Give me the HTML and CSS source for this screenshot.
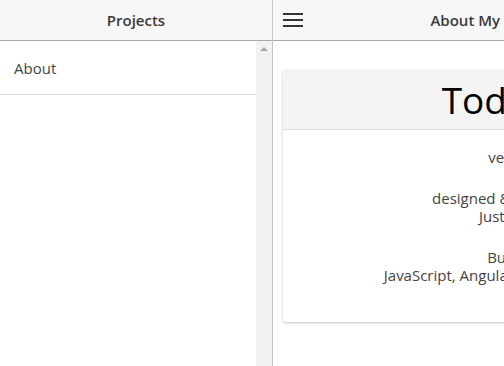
FILE: index.html
```html
<!DOCTYPE html>
<html>
	<head>
		<meta charset="utf-8">
		<link rel="stylesheet" href="styles.css">
	</head>
	<body>
		<div class="app">
			<aside class="sidebar">
				<header class="bar sidebarBar">
					<span class="barTitle">Projects</span>
				</header>
				<div class="sideBody">
					<ul class="projectList">
						<li class="projectItem">About</li>
					</ul>
					<div class="scrollbar">
						<span class="arrowUp"></span>
					</div>
				</div>
			</aside>

			<main class="detail">
				<header class="bar detailBar">
					<svg class="menuIcon" width="20" height="16" viewBox="0 0 20 16">
						<rect x="0" y="1" width="20" height="2"></rect>
						<rect x="0" y="7" width="20" height="2"></rect>
						<rect x="0" y="13" width="20" height="2"></rect>
					</svg>
					<span class="barTitle detailTitle">About My Todo List</span>
				</header>

				<div class="content">
					<section class="card">
						<div class="cardHead">
							<h1>Todo List</h1>
						</div>
						<div class="cardBody">
							<p>version 1</p>
							<p>designed &amp; developed by<br>Justin Miller</p>
							<p>Built with<br>JavaScript, Angular, Bootstrap and Sass</p>
						</div>
					</section>
				</div>
			</main>
		</div>
	</body>
</html>
```
FILE: styles.css
```css
html, body {
	margin: 0;
	height: 100%;
	overflow: hidden;
}

body {
	font-family: "Open Sans", "Liberation Sans", sans-serif;
	color: #444;
	background-color: #fff;
}

.app {
	display: flex;
	height: 100%;
}

/* ---------------------------------------------------------------- */
/* header bars */
/* ---------------------------------------------------------------- */

.bar {
	display: flex;
	align-items: center;
	height: 40px;
	background-color: #f7f7f7;
	border-bottom: 1px solid #a9a9a9;
	box-sizing: content-box;
}

.barTitle {
	font-size: 15px;
	font-weight: 600;
	color: #3a3a3a;
}

.sidebarBar {
	justify-content: center;
}

.detailBar {
	padding-left: 10px;
}

.menuIcon {
	fill: #333;
	flex: none;
}

.detailTitle {
	flex: 1;
	text-align: center;
	padding-right: 70px;
}

/* ---------------------------------------------------------------- */
/* sidebar */
/* ---------------------------------------------------------------- */

.sidebar {
	flex: 0 0 272px;
	display: flex;
	flex-direction: column;
	border-right: 1px solid #c4c4c4;
}

.sideBody {
	flex: 1;
	display: flex;
}

.projectList {
	flex: 1;
	list-style: none;
	margin: 0;
	padding: 0;
}

.projectItem {
	height: 53px;
	line-height: 54px;
	padding-left: 14px;
	font-size: 15px;
	color: #444;
	border-bottom: 1px solid #ddd;
}

.scrollbar {
	flex: 0 0 16px;
	background-color: #f1f1f1;
	display: flex;
	justify-content: center;
	padding-top: 6px;
	box-sizing: border-box;
}

.arrowUp {
	width: 0;
	height: 0;
	border-left: 4px solid transparent;
	border-right: 4px solid transparent;
	border-bottom: 4px solid #a3a3a3;
}

/* ---------------------------------------------------------------- */
/* detail */
/* ---------------------------------------------------------------- */

.detail {
	flex: 0 0 494px;
	display: flex;
	flex-direction: column;
}

.content {
	padding: 29px 10px 0 10px;
}

.card {
	background-color: #fff;
	border-radius: 3px;
	box-shadow: 0 1px 3px rgba(0, 0, 0, 0.25);
	overflow: hidden;
}

.cardHead {
	background-color: #f4f4f4;
	border-bottom: 1px solid #ddd;
	height: 59px;
	display: flex;
	align-items: center;
	justify-content: center;
}

.cardHead h1 {
	margin: 0;
	font-size: 37px;
	font-weight: 400;
	color: #000;
}

.cardBody {
	padding: 18px 10px 38px 10px;
	text-align: center;
	font-size: 15px;
	line-height: 18px;
	color: #444;
}

.cardBody p {
	margin: 0 0 23px 0;
}

.cardBody p:last-child {
	margin-bottom: 0;
}
```
